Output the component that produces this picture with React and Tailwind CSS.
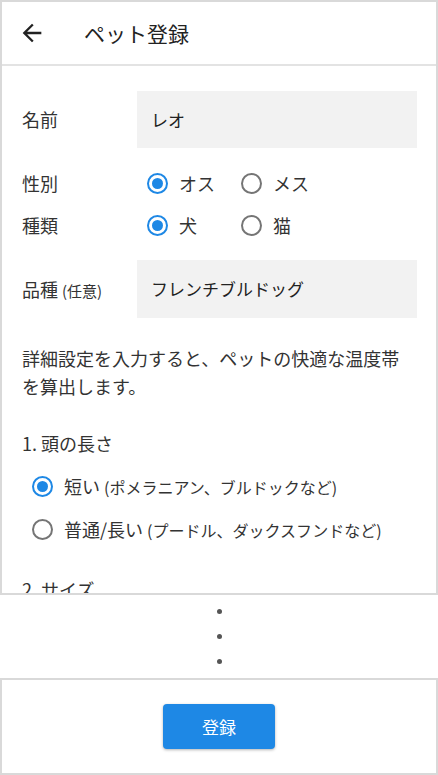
import React from "react";

function Radio({ checked }) {
  return checked ? (
    <span className="flex h-[21px] w-[21px] shrink-0 items-center justify-center rounded-full border-2 border-[#1e88e5]">
      <span className="h-[11px] w-[11px] rounded-full bg-[#1e88e5]" />
    </span>
  ) : (
    <span className="h-[21px] w-[21px] shrink-0 rounded-full border-2 border-[#757575]" />
  );
}

function RadioRow({ label, options }) {
  return (
    <div className="flex h-[42px] items-center">
      <div className="w-[115px] text-[18px] text-[#333]">{label}</div>
      <div className="flex items-center pl-[10px]">
        {options.map((o) => (
          <div key={o.t} className="flex w-[94px] items-center gap-[11px]">
            <Radio checked={o.c} />
            <span className="text-[18px] text-[#333]">{o.t}</span>
          </div>
        ))}
      </div>
    </div>
  );
}

export default function App() {
  return (
    <div
      className="flex h-[775px] w-[438px] flex-col bg-white"
      style={{ fontFamily: '"Noto Sans CJK JP", "Noto Sans", sans-serif' }}
    >
      <div className="flex h-[595px] shrink-0 flex-col overflow-hidden border-2 border-[#d9d9d9]">
        <div className="flex h-[64px] shrink-0 items-center border-b-2 border-[#e3e3e3]">
          <svg
            viewBox="0 0 24 24"
            className="ml-[16px] h-[28px] w-[28px]"
            fill="#222"
          >
            <path d="M20 11H7.83l5.59-5.59L12 4l-8 8 8 8 1.41-1.41L7.83 13H20v-2z" />
          </svg>
          <div className="ml-[38px] mt-[2px] text-[21px] text-[#222]">ペット登録</div>
        </div>
        <div className="flex flex-col pl-[20px] pr-[19px] pt-[25px]">
          <div className="flex items-center">
            <div className="w-[115px] text-[18px] text-[#333]">名前</div>
            <div className="flex h-[57px] flex-1 items-center bg-[#f2f2f2] px-[14px] text-[17px] text-[#222]">
              レオ
            </div>
          </div>
          <div className="mt-[14px]">
            <RadioRow
              label="性別"
              options={[
                { t: "オス", c: true },
                { t: "メス", c: false },
              ]}
            />
            <RadioRow
              label="種類"
              options={[
                { t: "犬", c: true },
                { t: "猫", c: false },
              ]}
            />
          </div>
          <div className="mt-[14px] flex items-center">
            <div className="w-[115px] text-[18px] text-[#333]">
              品種 <span className="text-[15px]">(任意)</span>
            </div>
            <div className="flex h-[58px] flex-1 items-center bg-[#f2f2f2] px-[14px] text-[17px] text-[#222]">
              フレンチブルドッグ
            </div>
          </div>
          <p className="mt-[26px] text-[18px] leading-[28px] text-[#333]">
            詳細設定を入力すると、ペットの快適な温度帯を算出します。
          </p>
          <div className="mt-[29px] text-[18px] leading-[28px] text-[#333]">
            1. 頭の長さ
          </div>
          <div className="mt-[8px] flex flex-col pl-[10px]">
            <div className="flex h-[43px] items-center gap-[11px]">
              <Radio checked />
              <span className="text-[18px] text-[#333]">
                短い <span className="text-[16px]">(ポメラニアン、ブルドックなど)</span>
              </span>
            </div>
            <div className="flex h-[43px] items-center gap-[11px]">
              <Radio checked={false} />
              <span className="text-[18px] text-[#333]">
                普通/長い <span className="text-[16px]">(プードル、ダックスフンドなど)</span>
              </span>
            </div>
          </div>
          <div className="mt-[24px] text-[18px] leading-[28px] text-[#333]">
            2. サイズ
          </div>
        </div>
      </div>
      <div className="flex h-[83px] shrink-0 flex-col items-center gap-[20px] pt-[14px]">
        <span className="h-[5px] w-[5px] rounded-full bg-[#555]" />
        <span className="h-[5px] w-[5px] rounded-full bg-[#555]" />
        <span className="h-[5px] w-[5px] rounded-full bg-[#555]" />
      </div>
      <div className="flex h-[97px] shrink-0 items-center justify-center border-2 border-[#d9d9d9]">
        <button className="h-[45px] w-[112px] rounded-[4px] bg-[#1e88e5] text-[17px] text-white shadow-[0_1px_3px_rgba(0,0,0,0.3)]">
          登録
        </button>
      </div>
    </div>
  );
}
